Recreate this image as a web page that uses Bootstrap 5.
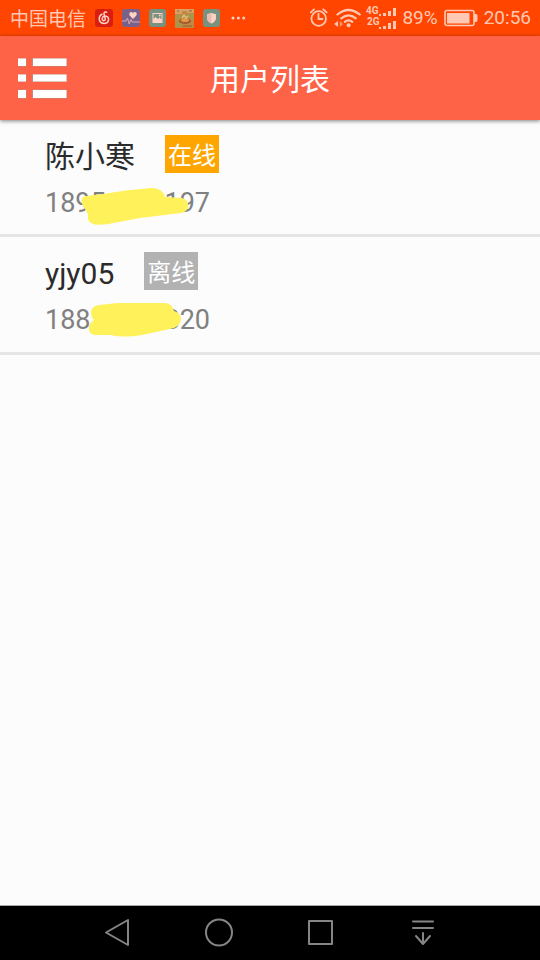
<!DOCTYPE html>
<html lang="zh-CN">
<head>
<meta charset="utf-8">
<meta name="viewport" content="width=device-width, initial-scale=1">
<title>用户列表</title>
<link href="https://cdn.jsdelivr.net/npm/bootstrap@5.3.0/dist/css/bootstrap.min.css" rel="stylesheet">
<style>
body { font-family: Roboto, "Noto Sans CJK SC", sans-serif; background: #fcfcfc; color: #2b2b2b; }
svg { display: block; flex: none; }
.status-bar { background: #ff4500; color: #ffc8b4; height: 36px; font-size: 19px; line-height: 36px; padding: 0 9px 0 10px; }
.carrier { line-height: 32px; padding-top: 4px; margin-right: 9px; }
.tray { gap: 9px; }
.app-bar { background: #ff6347; color: #fff; height: 84px; padding: 0 18px; box-shadow: 0 1px 4px rgba(0,0,0,.5); display: grid; grid-template-columns: 50px 1fr 50px; align-items: center; }
.app-title { font-size: 30px; line-height: 40px; font-weight: 400; padding-top: 4px; }
.user-row { padding: 15px 45px 0; border-bottom: 3px solid #e5e5e5; height: 117px; }
.user-row + .user-row { height: 118px; }
.user-head { gap: 30px; }
.user-name { font-size: 30px; line-height: 42px; padding-top: 1px; }
.state { font-size: 24px; line-height: 34px; height: 38px; padding: 4px 3px 0; color: #fff; }
.online { background: #ffa500; }
.offline { background: #b2b2b2; }
.phone { font-size: 27px; line-height: 32px; color: #808080; margin-top: 9px; width: 165px; }
.scribble { position: absolute; left: 35px; top: -7px; }
.nav-keys { background: #000; height: 55px; border-top: 1px solid #a5aaa8; padding: 0 66px; }
</style>
<script src="https://cdn.jsdelivr.net/npm/bootstrap@5.3.0/dist/js/bootstrap.bundle.min.js"></script>
</head>
<body class="d-flex flex-column min-vh-100">
<div class="status-bar d-flex align-items-center justify-content-between">
  <div class="d-flex align-items-center">
    <span class="carrier">中国电信</span>
    <div class="tray d-flex align-items-center">
      <svg width="18" height="18" viewBox="0 0 18 18"><rect width="18" height="18" rx="3" fill="#d81e10"/><path d="M11.6 3.2Q9 2.4 9 4.6L10.3 10Q10.3 11.7 8.8 11.7Q7 11.4 7.2 9.4Q7.7 7.3 10 7.1Q13.6 7.4 13.6 10.6Q13 14.5 9 14.5Q4.2 14.2 4.2 9.6Q4.5 6.3 7 5.3" fill="none" stroke="#ffd2c4" stroke-width="1.5" stroke-linecap="round"/></svg>
      <svg width="18" height="18" viewBox="0 0 18 18"><rect width="18" height="18" rx="3" fill="#79618a"/><path d="M11 10L7.4 6.3Q6.8 3 9.5 3Q11 3.3 11 4.4Q11.4 2.8 13.2 3Q15.5 3.8 14.4 6.5Z" fill="#ffd2c4"/><path d="M0 12H4L5.5 9L7.2 15L9 10.5L10.2 13H18" fill="none" stroke="#dba9a9"/></svg>
      <svg width="17" height="18" viewBox="0 0 17 18"><rect width="17" height="18" rx="3" fill="#77927f"/><rect x="3.500" y="4" width="10" height="10" fill="#ffd2c4"/><path d="M4.500 5H12.500V10.500L10.500 8.500L9 10L6.500 8L4.500 10Z" fill="#77927f"/><circle cx="10.800" cy="6.500" r="1" fill="#ffd2c4"/></svg>
      <svg width="19" height="19" viewBox="0 0 19 19"><rect width="19" height="19" fill="#bd8944"/><path d="M0 0H19V4H12V2H7V5H0Z" fill="#d7a166"/><path d="M1 6H5V8H2V12H0V6ZM14 5H19V10H16V8H14ZM1 14H6V17H1Z" fill="#9b9d4e"/><ellipse cx="10" cy="12" rx="6" ry="3" fill="#a85930"/><ellipse cx="10" cy="11" rx="4" ry="2" fill="#dc9b4b"/><path d="M7 9L9 6L11 9L13 7" fill="none" stroke="#d4c17a" stroke-width="1.5"/><path d="M2 2H4M14 2H17M8 17H17" stroke="#925f39"/></svg>
      <svg width="17" height="18" viewBox="0 0 17 18"><rect width="17" height="18" rx="3" fill="#77927f"/><path d="M8.5 4L13 5.2V9.5Q12.3 13 8.5 14.5Q4.7 13 4 9.5V5.2Z" fill="#ffd2c4"/><path d="M8.5 4V14.5Q4.7 13 4 9.5V5.2Z" fill="#e9beb0"/></svg>
      <svg width="18" height="18" viewBox="0 0 18 18" fill="#ffd2c4"><circle cx="4" cy="9" r="1.500"/><circle cx="9.300" cy="9" r="1.500"/><circle cx="14.700" cy="9" r="1.500"/></svg>
    </div>
  </div>
  <div class="d-flex align-items-center">
    <svg width="90" height="30" viewBox="308 3 90 30" fill="none" stroke="#ffc8b4" stroke-width="1.8" stroke-linecap="round">
      <circle cx="318.7" cy="18.5" r="7.3"/><path d="M318.5 14V19H322.5M310.8 12.3L314 9.3M323.3 9.3L326.7 12.3"/>
      <path d="M337.5 14.5Q348.5 5.5 359.8 14.5M341.3 18.3Q348.5 12.3 355.8 18.3M344.8 21.8Q348.5 18.8 352.3 21.8" stroke-width="2.2"/>
      <circle cx="348.6" cy="25.2" r="2" fill="#ffc8b4" stroke="none"/>
      <path d="M338 21V27L334.2 24Z" fill="#ffc8b4" stroke="none"/><path d="M339.8 21V27L343.2 24Z" fill="#ff9670" stroke="none"/>
      <g fill="#ffc8b4" stroke="none"><text x="366" y="14" font-size="10" font-weight="700">4G</text><text x="367" y="25" font-size="10" font-weight="700">2G</text>
      <path d="M379 14H381V16H379ZM383 13H386V16H383ZM388 11H391V16H388ZM393 8H396V16H393ZM379 27H381V29H379ZM383 26H386V29H383ZM388 23H391V29H388ZM393 21H396V29H393Z"/></g>
    </svg>
    <span class="ms-1">89%</span>
    <svg class="mx-1" width="38" height="18" viewBox="0 0 38 18"><rect x="3" y="1.500" width="29" height="15" rx="2" fill="none" stroke="#ffc8b4" stroke-width="1.600"/><rect x="5" y="4" width="22.500" height="10.500" fill="#ffc8b4"/><path d="M32 5H34Q35.500 5 35.500 7V11Q35.500 13 34 13H32Z" fill="#ffc8b4"/></svg>
    <span>20:56</span>
  </div>
</div>
<header class="app-bar">
  <button type="button" class="btn p-0 border-0" aria-label="菜单">
    <svg width="50" height="44" viewBox="0 0 50 44"><path d="M0 2H8.500V10.500H0ZM14 2H49V10.500H14ZM0 18H8.500V26H0ZM14 18H49V26H14ZM0 33.500H8.500V42.500H0ZM14 33.500H49V42.500H14Z" fill="#c98577"/><path d="M0 2.500H8V10H0ZM15 2.500H48.500V10H15ZM0 18.500H8V25.500H0ZM15 18.500H48.500V25.500H15ZM0 34H8V42H0ZM15 34H48.500V42H15Z" fill="#fff"/></svg>
  </button>
  <h1 class="app-title text-center m-0">用户列表</h1>
</header>
<main class="flex-grow-1">
  <ul class="list-unstyled m-0">
    <li class="user-row">
      <div class="user-head d-flex align-items-start"><span class="user-name">陈小寒</span><span class="state online">在线</span></div>
      <div class="phone d-flex justify-content-between position-relative"><span>1895</span><span>197</span>
        <svg class="scribble" width="110" height="50" viewBox="80 180 110 50" aria-hidden="true"><path d="M82 204Q80 197 86 196L103 194Q125 190 151 188Q163 188 165 197L182 198Q189 200 188 207Q187 212 181 213L140 218L108 224Q90 227 88 219V214Z" fill="#fff159"/></svg>
      </div>
    </li>
    <li class="user-row">
      <div class="user-head d-flex align-items-start"><span class="user-name">yjy05</span><span class="state offline">离线</span></div>
      <div class="phone d-flex justify-content-between position-relative"><span>188</span><span>820</span>
        <svg class="scribble" width="110" height="50" viewBox="80 297 110 50" aria-hidden="true"><path d="M91 313Q91 306 99 305L118 303H166Q172 304 174 311Q181 313 181 319Q181 325 174 328L142 335Q125 338 110 335L94 335Q88 333 89 327Q90 322 94 320Q91 317 91 313Z" fill="#fff159"/></svg>
      </div>
    </li>
  </ul>
</main>
<nav class="nav-keys d-flex align-items-center justify-content-around" aria-label="系统导航">
  <button type="button" class="btn p-0 border-0" aria-label="返回"><svg width="30" height="30" viewBox="0 1 30 30" fill="none" stroke="#858585" stroke-width="2" stroke-linejoin="round"><path d="M26 3V28L4 15.500Z"/></svg></button>
  <button type="button" class="btn p-0 border-0" aria-label="主页"><svg width="30" height="30" viewBox="0 1 30 30" fill="none" stroke="#858585" stroke-width="2"><circle cx="15" cy="15.500" r="13"/></svg></button>
  <button type="button" class="btn p-0 border-0" aria-label="最近任务"><svg width="30" height="30" viewBox="0 1 30 30" fill="none" stroke="#858585" stroke-width="2" stroke-linejoin="round"><rect x="3" y="4" width="23" height="23"/></svg></button>
  <button type="button" class="btn p-0 border-0" aria-label="通知栏"><svg width="30" height="30" viewBox="0 1 30 30" fill="none" stroke="#858585" stroke-width="2" stroke-linecap="round" stroke-linejoin="round"><path d="M5 4.500H25M5 11H25M15 16V27M8 19L15 27L22 19"/></svg></button>
</nav>
</body>
</html>
